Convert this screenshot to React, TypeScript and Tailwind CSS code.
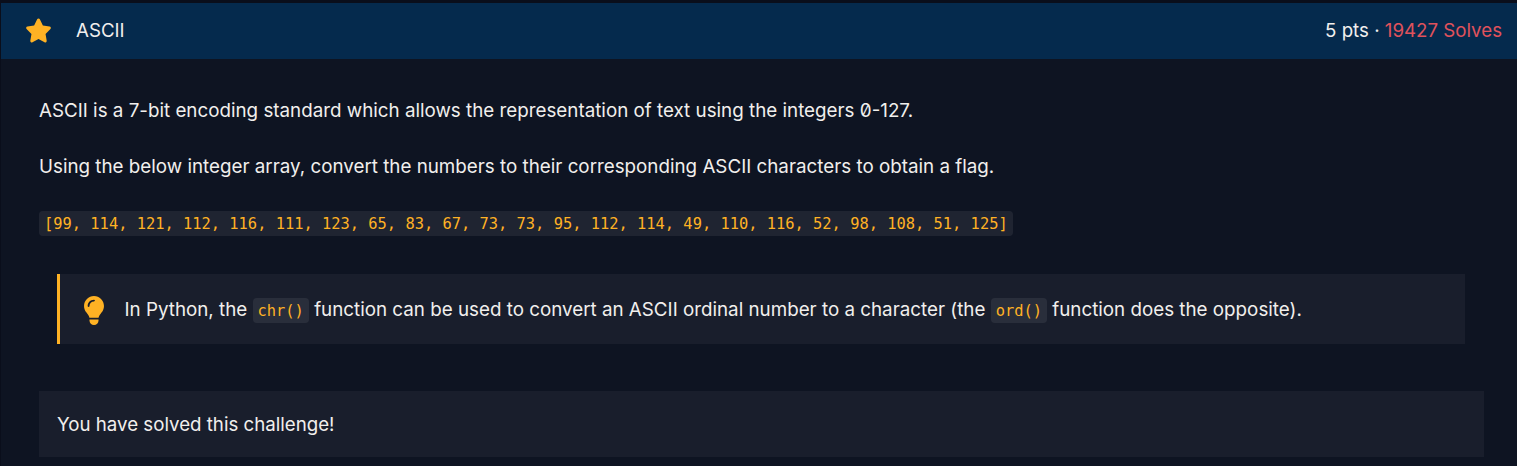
import React from "react";
import { FaStar, FaLightbulb } from "react-icons/fa6";

const codes = [99, 114, 121, 112, 116, 111, 123, 65, 83, 67, 73, 73, 95, 112, 114, 49, 110, 116, 52, 98, 108, 51, 125];

function Code({ children }: { children: React.ReactNode }) {
  return (
    <code className="rounded-[4px] bg-white/[0.07] px-[5px] pt-1 pb-[3px] font-['DejaVu_Sans_Mono',monospace] text-[15.4px] text-[#ffb224]">
      {children}
    </code>
  );
}

export default function App() {
  return (
    <main className="h-[466px] overflow-hidden border-l border-[#0a0e1b] bg-[#0e1422] font-['Inter',sans-serif] text-[18.8px] leading-7 text-[#f1efed] [font-feature-settings:'zero'_1]">
      <header className="flex h-[59px] items-center justify-between border-t-[3px] border-[#0a0e1b] bg-[#052a4d] pr-[15px] pb-px pl-6 text-[18.7px]">
        <div className="flex items-center gap-[24px]">
          <FaStar className="h-[27px] w-[27px] text-[#ffb224]" />
          <h1>ASCII</h1>
        </div>
        <p>5 pts · <span className="text-[#e0525c]">19427 Solves</span></p>
      </header>
      <div className="pt-[38px] pr-[33px] pl-[38px]">
        <p>ASCII is a 7-bit encoding standard which allows the representation of text using the integers 0-127.</p>
        <p className="mt-7">Using the below integer array, convert the numbers to their corresponding ASCII characters to obtain a flag.</p>
        <p className="mt-7 whitespace-nowrap"><Code>[{codes.join(", ")}]</Code></p>
        <aside className="mt-[36px] mr-[19px] ml-[18px] flex h-[70px] items-center border-l-[3px] border-[#ffb224] bg-[#191e2c] pl-[23px]">
          <FaLightbulb className="mt-[3px] h-[29px] w-[22px] text-[#ffb224]" />
          <p className="mt-[2px] ml-[19.5px] whitespace-nowrap">
            In Python, the <Code>chr()</Code> function can be used to convert an ASCII ordinal number to a character (the <Code>ord()</Code> function does the opposite).
          </p>
        </aside>
        <p className="mt-[47px] flex h-[66px] items-center bg-[#191e2c] pt-[2px] pl-[18px] text-[18.7px]">You have solved this challenge!</p>
      </div>
    </main>
  );
}
